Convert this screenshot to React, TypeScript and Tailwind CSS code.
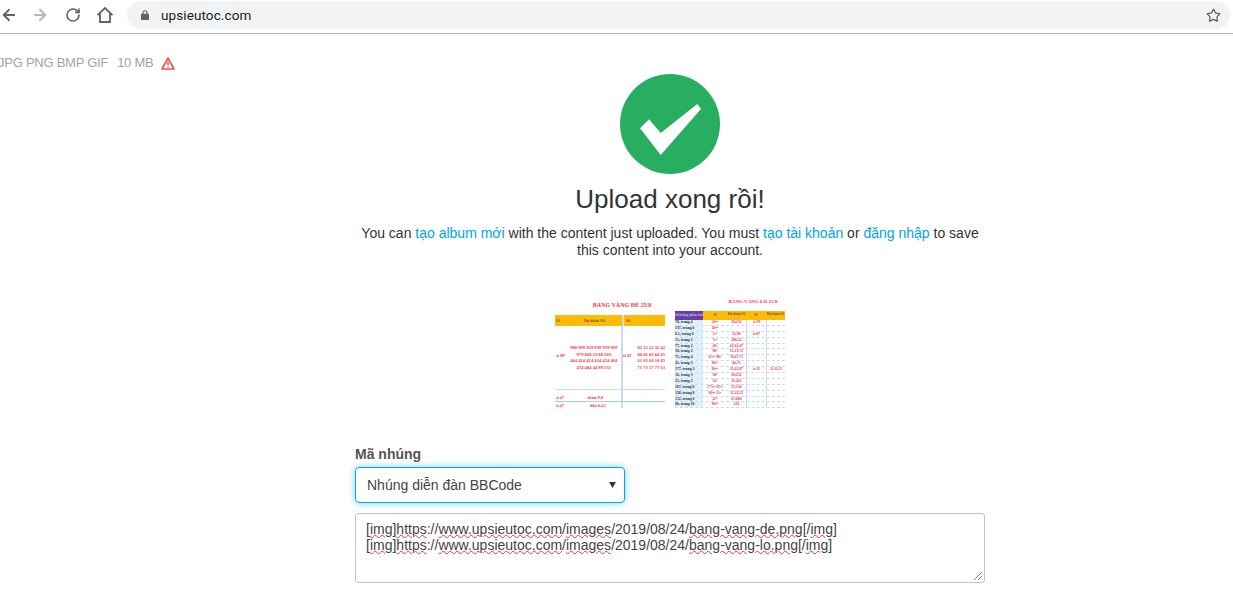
import { ArrowLeft, ArrowRight, RotateCw, Star } from "lucide-react";

const font = { fontFamily: '"Liberation Sans", Arial, sans-serif' };

const leftRows = ["980 969 929 949 959 969", "979 868 23 88 383", "404 414 424 434 454 464", "474 484 44 99 131"];
const rightRows = ["82 12 22 32 42", "00 01 03 04 05", "61 63 64 16 65", "71 73 57 77 13"];
const names = ["78, trung  4", "137, trung 6", "6.5, trung  6", "15, trung  1", "77, trung  2", "18, trung  2", "75, trung  4", "45, trung  3", "177, trung  3", "56, trung  3", "25, trung  2", "167, trung  8", "128, trung  8", "152, trung  6", "86, trung  10"];
const v1 = ["20••", "40••", "1••", "5••", "20•", "90•", "65•• 80•", "80••", "80••", "30•", "22•", "175•• 47••", "80•• 11•", "47•", "80••"];
const v2 = ["20,232", "", "12,90", "200,22", "41,12,47", "12,13,72", "76,67,71", "44,71", "11,11,87", "20,232", "11,421", "27,120", "12,11,22", "67,684", "232"];

function Home() {
  return (
    <svg viewBox="0 0 18 18" className="w-[18px] h-[18px]" fill="none" stroke="#5f6368" strokeWidth="1.8">
      <path d="M1.5 9.2 9 2l7.5 7.2M4 7.5V16h10V7.5" />
    </svg>
  );
}

function Padlock() {
  return (
    <svg viewBox="0 0 8 10" className="w-[8px] h-[10px]">
      <path d="M2 4V2.8a2 2 0 0 1 4 0V4" fill="none" stroke="#5f6368" strokeWidth="1.1" />
      <rect x="0" y="3.8" width="8" height="6.2" rx="0.8" fill="#5f6368" />
    </svg>
  );
}

function Check() {
  return (
    <svg viewBox="0 0 100 100" className="w-[100px] h-[100px]">
      <circle cx="50" cy="50" r="50" fill="#27ae60" />
      <path d="M20 54.3 L29 45.3 L40.7 59 L77.3 30 L81 35 L40.7 81 Z" fill="#fff" />
    </svg>
  );
}

function ThumbLeft() {
  return (
    <div className="relative w-[110px] h-[110px] overflow-hidden bg-white text-[#f5303f] font-bold" style={{ fontFamily: '"Liberation Serif", serif' }}>
      <div className="h-[17px] pt-[4px] pl-[24px] text-center text-[6px] leading-[6px] whitespace-nowrap">BẢNG VÀNG ĐỀ 25/8</div>
      <div className="flex h-[11px] bg-[#fcbb06] text-[4px] leading-[11px] text-[#7a5200]">
        <div className="w-[12px] pl-[1px]">S1</div>
        <div className="w-[55px] text-center">Dự đoán /S3</div>
        <div className="w-[2px] bg-[#c7dbf4]" />
        <div className="flex-1 pl-[2px]">S4</div>
      </div>
      <div className="mt-[19px] flex text-[4.6px] leading-[6.5px]">
        <div className="w-[12px] pt-[8px] pl-[1px] whitespace-nowrap">sí 89</div>
        <div className="w-[55px] text-center">
          {leftRows.map((r) => (
            <div key={r} className="whitespace-nowrap">{r}</div>
          ))}
        </div>
        <div className="w-[2px]" />
        <div className="w-[15px] pt-[8px] whitespace-nowrap">sí 47</div>
        <div className="whitespace-nowrap">
          {rightRows.map((r) => (
            <div key={r}>{r}</div>
          ))}
        </div>
      </div>
      <div className="absolute left-[66px] top-[28px] bottom-0 w-[2px] bg-[#c7dbf4]" />
      <div className="absolute left-0 right-0 top-[91px] h-[1px] bg-[#c7dbf4]" />
      <div className="absolute left-0 right-0 top-[103px] h-[1px] bg-[#a9c8ee]" />
      <div className="absolute left-[1px] top-[97px] text-[4.2px] leading-[5px]">sí 47</div>
      <div className="absolute left-[32px] top-[97px] text-[4.2px] leading-[5px]">chạm 9,8</div>
      <div className="absolute left-[1px] top-[105px] text-[4.2px] leading-[5px]">sí 47</div>
      <div className="absolute left-[35px] top-[105px] text-[4.2px] leading-[5px]">đầu 0,2,5</div>
    </div>
  );
}

function ThumbRight() {
  return (
    <div className="w-[110px] h-[110px] overflow-hidden bg-white font-bold" style={{ fontFamily: '"Liberation Serif", serif' }}>
      <div className="h-[13px] pt-[1px] pl-[46px] text-center text-[5px] leading-[6px] text-[#f5303f] whitespace-nowrap">BẢNG VÀNG LÔ 25/8</div>
      <div className="flex h-[9px] text-[3.5px] leading-[9px] text-center text-[#7a5200]">
        <div className="w-[28px] bg-[#6f3aa8] text-[#9fc5f0] whitespace-nowrap overflow-hidden">Số lượng phân tích</div>
        <div className="w-[24px] bg-[#fcbb06]">S1</div>
        <div className="w-[19px] bg-[#fcbb06] leading-[4px] pt-[1px]">Dự đoán S2</div>
        <div className="w-[20px] bg-[#fcbb06]">S1</div>
        <div className="w-[19px] bg-[#fcbb06] leading-[4px] pt-[1px]">Dự đoán S2</div>
      </div>
      {names.map((n, i) => (
        <div key={n} className="flex h-[5.9px] text-[3.8px] leading-[5.9px] border-b border-dashed border-[#c5d8f5] text-center whitespace-nowrap">
          <div className="w-[28px] bg-[#def0f8] text-left text-[#333] overflow-hidden">{n}</div>
          <div className="w-[24px] text-[#f5303f] overflow-hidden">{v1[i]}</div>
          <div className="w-[19px] text-[#f5303f] overflow-hidden">{v2[i]}</div>
          <div className="w-[20px] text-[#f5303f] border-l border-dashed border-[#c5d8f5]">{i === 0 ? "sí 39" : i === 2 ? "sí 67" : i === 8 ? "sí 11" : ""}</div>
          <div className="w-[19px] text-[#f5303f] border-l border-dashed border-[#c5d8f5] text-[3.4px]">{i === 8 ? "12,11,21" : ""}</div>
        </div>
      ))}
    </div>
  );
}

function Url({ children }: { children: string }) {
  return <span className="underline decoration-wavy decoration-[#e53935] decoration-[1px] underline-offset-0">{children}</span>;
}

function BBLine({ name }: { name: string }) {
  return (
    <div className="whitespace-nowrap">
      [<Url>img</Url>]<Url>https</Url>://<Url>www.upsieutoc.com</Url>/<Url>images</Url>/2019/08/24/<Url>{name}</Url>[/<Url>img</Url>]
    </div>
  );
}

export default function App() {
  return (
    <div className="w-[1233px] h-[609px] overflow-hidden bg-white text-[#333]" style={font}>
      <div className="h-[34px] flex items-center border-b border-[#b4b4b4]">
        <div className="flex items-center w-[127px] pb-[4px] text-[#5f6368]">
          <ArrowLeft className="w-[18px] h-[18px]" strokeWidth={2.4} />
          <ArrowRight className="w-[18px] h-[18px] ml-[13px] text-[#b4b6b8]" strokeWidth={2.4} />
          <RotateCw className="w-[16px] h-[16px] ml-[16px]" strokeWidth={2.4} />
          <div className="ml-[15px]"><Home /></div>
        </div>
        <div className="w-[1103px] h-[28px] mb-[3px] flex items-center rounded-full bg-[#f1f3f4] pl-[14px] pr-[9px]">
          <Padlock />
          <span className="ml-[12px] text-[13.5px] text-[#202124] tracking-[0.1px]" style={{ fontFamily: 'Roboto, "Liberation Sans", sans-serif' }}>upsieutoc.com</span>
          <Star className="ml-auto w-[15px] h-[15px] text-[#5f6368]" strokeWidth={2} />
        </div>
      </div>

      <div className="flex items-center h-[18px] mt-[20px] -ml-[2px] text-[13px] tracking-[-0.25px] text-[#a3a3a3] whitespace-nowrap">
        <span>JPG PNG BMP GIF</span>
        <span className="ml-[9px]">10 MB</span>
        <svg viewBox="0 0 14 13" className="ml-[8px] w-[14px] h-[13px]" fill="none">
          <path d="M7 1 13 12H1Z" stroke="#e9524a" strokeWidth="1.6" strokeLinejoin="round" />
          <path d="M7 4.6V8.2M7 9.2v1.3" stroke="#e9524a" strokeWidth="1.5" />
        </svg>
      </div>

      <div className="ml-[355px] w-[630px] mt-[2px]">
        <div className="flex justify-center"><Check /></div>
        <h1 className="mt-[7px] text-center text-[26px] leading-[36px] text-[#333]">Upload xong rồi!</h1>
        <p className="mt-[8px] text-center text-[14px] leading-[17px]">
          You can <span className="text-[#00a5e0]">tạo album mới</span> with the content just uploaded. You must{" "}
          <span className="text-[#00a5e0]">tạo tài khoản</span> or <span className="text-[#00a5e0]">đăng nhập</span> to save
          <br />
          this content into your account.
        </p>
        <div className="mt-[39px] flex justify-center gap-[10px]">
          <ThumbLeft />
          <ThumbRight />
        </div>
        <div className="mt-[38px] text-[14px] leading-[17px] font-bold text-[#555]">Mã nhúng</div>
        <div className="mt-[4px] w-[270px] h-[36px] flex items-center justify-between pl-[11px] pr-[8px] rounded-[4px] border border-[#00a8e6] shadow-[0_0_7px_rgba(0,168,230,0.55)] text-[14px] text-[#444]">
          <span>Nhúng diễn đàn BBCode</span>
          <svg viewBox="0 0 8 7" className="w-[7px] h-[6px]"><path d="M0 0h8L4 7Z" fill="#333" /></svg>
        </div>
        <div className="relative mt-[10px] h-[70px] rounded-[3px] border border-[#c4c4c4] px-[10px] pt-[7px] text-[14px] leading-[16px] text-[#444]">
          <BBLine name="bang-vang-de.png" />
          <BBLine name="bang-vang-lo.png" />
          <svg viewBox="0 0 10 10" className="absolute right-[1px] bottom-[1px] w-[10px] h-[10px]" stroke="#777" strokeWidth="1">
            <path d="M1 9 9 1M5 9l4-4" />
          </svg>
        </div>
      </div>
    </div>
  );
}
